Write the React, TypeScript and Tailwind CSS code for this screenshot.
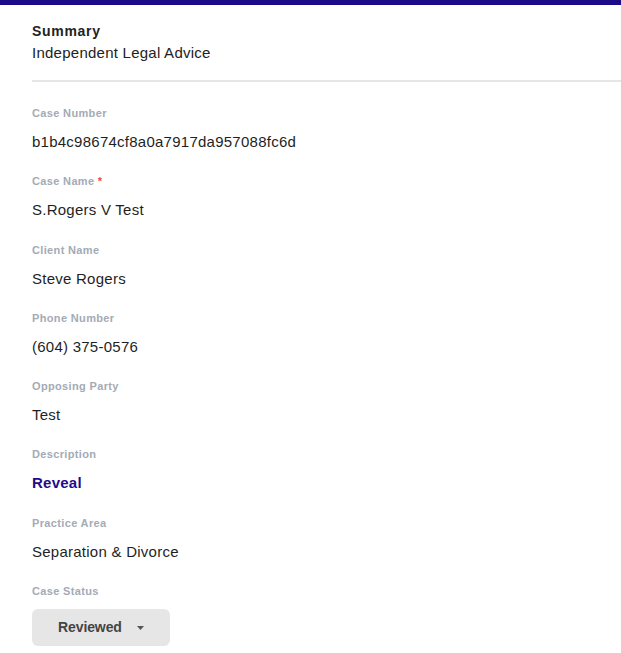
import React from "react";

const fields: { label: string; value: string; required?: boolean; link?: boolean }[] = [
  { label: "Case Number", value: "b1b4c98674cf8a0a7917da957088fc6d" },
  { label: "Case Name", value: "S.Rogers V Test", required: true },
  { label: "Client Name", value: "Steve Rogers" },
  { label: "Phone Number", value: "(604) 375-0576" },
  { label: "Opposing Party", value: "Test" },
  { label: "Description", value: "Reveal", link: true },
  { label: "Practice Area", value: "Separation & Divorce" },
];

function Label({ children, required }: { children: React.ReactNode; required?: boolean }) {
  return (
    <div className="h-4 text-[11px] leading-4 font-bold tracking-[0.35px] text-[#a3abb6]">
      {children}
      {required && <span className="text-[#e84b4b]"> *</span>}
    </div>
  );
}

export default function App() {
  return (
    <div
      className="w-[621px] h-[653px] bg-white overflow-hidden"
      style={{ fontFamily: '"Liberation Sans", Arial, sans-serif' }}
    >
      <div className="h-[5px] bg-[#1c0b86]" />
      <div className="pl-8 pt-4">
        <div className="text-[14px] leading-5 font-bold tracking-[0.7px] text-[#222]">Summary</div>
        <div className="mt-[2px] text-[15px] leading-5 tracking-[0.25px] text-[#222]">Independent Legal Advice</div>
        <div className="mt-[17px] h-[2px] bg-[#e6e6e6]" />
        <div className="pt-[23px] flex flex-col gap-[21.3px]">
          {fields.map((f) => (
            <div key={f.label} className="flex flex-col">
              <Label required={f.required}>{f.label}</Label>
              <div
                className={
                  "mt-[11px] h-5 text-[15px] leading-5 tracking-[0.25px] " +
                  (f.link ? "font-bold text-[#1f0c8c]" : "text-[#1f1f1f]")
                }
              >
                {f.value}
              </div>
            </div>
          ))}
          <div className="flex flex-col">
            <Label>Case Status</Label>
            <div className="mt-[10px] w-[138px] h-[37px] rounded-md bg-[#e6e6e6] flex items-center pl-[26px] pr-[26px] justify-between">
              <span className="text-[14px] font-bold tracking-[-0.1px] text-[#444]">Reviewed</span>
              <svg width="7" height="4" viewBox="0 0 7 4" className="mt-[1px]">
                <path d="M0 0 L7 0 L3.5 4 Z" fill="#555" />
              </svg>
            </div>
          </div>
        </div>
      </div>
    </div>
  );
}
